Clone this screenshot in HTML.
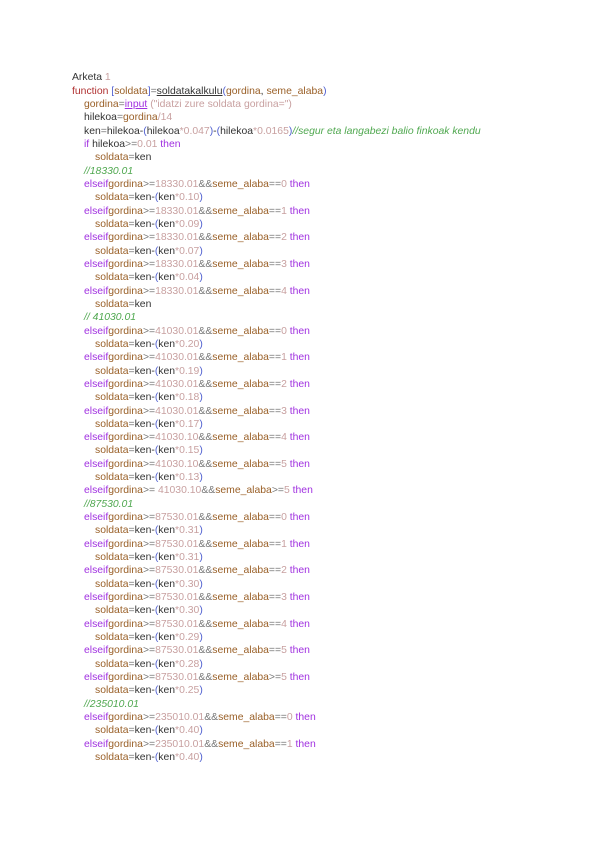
<!DOCTYPE html>
<html><head><meta charset="utf-8"><style>
html,body{margin:0;padding:0;background:#fff;width:600px;height:848px;overflow:hidden}
#c{position:absolute;left:72px;top:71.3px;font-family:"Liberation Sans",sans-serif;font-size:10.4px;line-height:13.33px;color:#333}
#c div{white-space:pre;height:13.33px}
.i1{padding-left:12px}.i2{padding-left:23px}
.k{color:#a030e0}.v{color:#9a6028}.n{color:#c8a0a0}.c{color:#50a850;font-style:italic}.p{color:#5060d0}.o{color:#777}.u{text-decoration:underline}
</style></head><body><div id="c"><div>Arketa <span class="n">1</span></div><div><span class="k" style="color:#b03030">function</span> <span class="p">[</span><span class="v">soldata</span><span class="p">]</span><span class="o">=</span><span class="u">soldatakalkulu</span><span class="p">(</span><span class="v">gordina</span>, <span class="v">seme_alaba</span><span class="p">)</span></div><div class="i1"><span class="v">gordina</span><span class="o">=</span><span class="k u">input</span> <span class="n">("idatzi zure soldata gordina=")</span></div><div class="i1">hilekoa<span class="o">=</span><span class="v">gordina</span><span class="n">/14</span></div><div class="i1">ken<span class="o">=</span>hilekoa-<span class="p">(</span>hilekoa<span class="n">*0.047</span><span class="p">)</span>-<span class="p">(</span>hilekoa<span class="n">*0.0165</span><span class="p">)</span><span class="c">//segur eta langabezi balio finkoak kendu</span></div><div class="i1"><span class="k">if</span> hilekoa<span class="o">&gt;=</span><span class="n">0.01</span> <span class="k">then</span></div><div class="i2"><span class="v">soldata</span><span class="o">=</span>ken</div><div class="i1 c">//18330.01</div><div class="i1"><span class="k">elseif</span><span class="v">gordina</span><span class="o">&gt;=</span><span class="n">18330.01</span><span class="o">&amp;&amp;</span><span class="v">seme_alaba</span><span class="o">==</span><span class="n">0</span> <span class="k">then</span></div><div class="i2"><span class="v">soldata</span><span class="o">=</span>ken-<span class="p">(</span>ken<span class="n">*0.10</span><span class="p">)</span></div><div class="i1"><span class="k">elseif</span><span class="v">gordina</span><span class="o">&gt;=</span><span class="n">18330.01</span><span class="o">&amp;&amp;</span><span class="v">seme_alaba</span><span class="o">==</span><span class="n">1</span> <span class="k">then</span></div><div class="i2"><span class="v">soldata</span><span class="o">=</span>ken-<span class="p">(</span>ken<span class="n">*0.09</span><span class="p">)</span></div><div class="i1"><span class="k">elseif</span><span class="v">gordina</span><span class="o">&gt;=</span><span class="n">18330.01</span><span class="o">&amp;&amp;</span><span class="v">seme_alaba</span><span class="o">==</span><span class="n">2</span> <span class="k">then</span></div><div class="i2"><span class="v">soldata</span><span class="o">=</span>ken-<span class="p">(</span>ken<span class="n">*0.07</span><span class="p">)</span></div><div class="i1"><span class="k">elseif</span><span class="v">gordina</span><span class="o">&gt;=</span><span class="n">18330.01</span><span class="o">&amp;&amp;</span><span class="v">seme_alaba</span><span class="o">==</span><span class="n">3</span> <span class="k">then</span></div><div class="i2"><span class="v">soldata</span><span class="o">=</span>ken-<span class="p">(</span>ken<span class="n">*0.04</span><span class="p">)</span></div><div class="i1"><span class="k">elseif</span><span class="v">gordina</span><span class="o">&gt;=</span><span class="n">18330.01</span><span class="o">&amp;&amp;</span><span class="v">seme_alaba</span><span class="o">==</span><span class="n">4</span> <span class="k">then</span></div><div class="i2"><span class="v">soldata</span><span class="o">=</span>ken</div><div class="i1 c">// 41030.01</div><div class="i1"><span class="k">elseif</span><span class="v">gordina</span><span class="o">&gt;=</span><span class="n">41030.01</span><span class="o">&amp;&amp;</span><span class="v">seme_alaba</span><span class="o">==</span><span class="n">0</span> <span class="k">then</span></div><div class="i2"><span class="v">soldata</span><span class="o">=</span>ken-<span class="p">(</span>ken<span class="n">*0.20</span><span class="p">)</span></div><div class="i1"><span class="k">elseif</span><span class="v">gordina</span><span class="o">&gt;=</span><span class="n">41030.01</span><span class="o">&amp;&amp;</span><span class="v">seme_alaba</span><span class="o">==</span><span class="n">1</span> <span class="k">then</span></div><div class="i2"><span class="v">soldata</span><span class="o">=</span>ken-<span class="p">(</span>ken<span class="n">*0.19</span><span class="p">)</span></div><div class="i1"><span class="k">elseif</span><span class="v">gordina</span><span class="o">&gt;=</span><span class="n">41030.01</span><span class="o">&amp;&amp;</span><span class="v">seme_alaba</span><span class="o">==</span><span class="n">2</span> <span class="k">then</span></div><div class="i2"><span class="v">soldata</span><span class="o">=</span>ken-<span class="p">(</span>ken<span class="n">*0.18</span><span class="p">)</span></div><div class="i1"><span class="k">elseif</span><span class="v">gordina</span><span class="o">&gt;=</span><span class="n">41030.01</span><span class="o">&amp;&amp;</span><span class="v">seme_alaba</span><span class="o">==</span><span class="n">3</span> <span class="k">then</span></div><div class="i2"><span class="v">soldata</span><span class="o">=</span>ken-<span class="p">(</span>ken<span class="n">*0.17</span><span class="p">)</span></div><div class="i1"><span class="k">elseif</span><span class="v">gordina</span><span class="o">&gt;=</span><span class="n">41030.10</span><span class="o">&amp;&amp;</span><span class="v">seme_alaba</span><span class="o">==</span><span class="n">4</span> <span class="k">then</span></div><div class="i2"><span class="v">soldata</span><span class="o">=</span>ken-<span class="p">(</span>ken<span class="n">*0.15</span><span class="p">)</span></div><div class="i1"><span class="k">elseif</span><span class="v">gordina</span><span class="o">&gt;=</span><span class="n">41030.10</span><span class="o">&amp;&amp;</span><span class="v">seme_alaba</span><span class="o">==</span><span class="n">5</span> <span class="k">then</span></div><div class="i2"><span class="v">soldata</span><span class="o">=</span>ken-<span class="p">(</span>ken<span class="n">*0.13</span><span class="p">)</span></div><div class="i1"><span class="k">elseif</span><span class="v">gordina</span><span class="o">&gt;=</span> <span class="n">41030.10</span><span class="o">&amp;&amp;</span><span class="v">seme_alaba</span><span class="o">&gt;=</span><span class="n">5</span> <span class="k">then</span></div><div class="i1 c">//87530.01</div><div class="i1"><span class="k">elseif</span><span class="v">gordina</span><span class="o">&gt;=</span><span class="n">87530.01</span><span class="o">&amp;&amp;</span><span class="v">seme_alaba</span><span class="o">==</span><span class="n">0</span> <span class="k">then</span></div><div class="i2"><span class="v">soldata</span><span class="o">=</span>ken-<span class="p">(</span>ken<span class="n">*0.31</span><span class="p">)</span></div><div class="i1"><span class="k">elseif</span><span class="v">gordina</span><span class="o">&gt;=</span><span class="n">87530.01</span><span class="o">&amp;&amp;</span><span class="v">seme_alaba</span><span class="o">==</span><span class="n">1</span> <span class="k">then</span></div><div class="i2"><span class="v">soldata</span><span class="o">=</span>ken-<span class="p">(</span>ken<span class="n">*0.31</span><span class="p">)</span></div><div class="i1"><span class="k">elseif</span><span class="v">gordina</span><span class="o">&gt;=</span><span class="n">87530.01</span><span class="o">&amp;&amp;</span><span class="v">seme_alaba</span><span class="o">==</span><span class="n">2</span> <span class="k">then</span></div><div class="i2"><span class="v">soldata</span><span class="o">=</span>ken-<span class="p">(</span>ken<span class="n">*0.30</span><span class="p">)</span></div><div class="i1"><span class="k">elseif</span><span class="v">gordina</span><span class="o">&gt;=</span><span class="n">87530.01</span><span class="o">&amp;&amp;</span><span class="v">seme_alaba</span><span class="o">==</span><span class="n">3</span> <span class="k">then</span></div><div class="i2"><span class="v">soldata</span><span class="o">=</span>ken-<span class="p">(</span>ken<span class="n">*0.30</span><span class="p">)</span></div><div class="i1"><span class="k">elseif</span><span class="v">gordina</span><span class="o">&gt;=</span><span class="n">87530.01</span><span class="o">&amp;&amp;</span><span class="v">seme_alaba</span><span class="o">==</span><span class="n">4</span> <span class="k">then</span></div><div class="i2"><span class="v">soldata</span><span class="o">=</span>ken-<span class="p">(</span>ken<span class="n">*0.29</span><span class="p">)</span></div><div class="i1"><span class="k">elseif</span><span class="v">gordina</span><span class="o">&gt;=</span><span class="n">87530.01</span><span class="o">&amp;&amp;</span><span class="v">seme_alaba</span><span class="o">==</span><span class="n">5</span> <span class="k">then</span></div><div class="i2"><span class="v">soldata</span><span class="o">=</span>ken-<span class="p">(</span>ken<span class="n">*0.28</span><span class="p">)</span></div><div class="i1"><span class="k">elseif</span><span class="v">gordina</span><span class="o">&gt;=</span><span class="n">87530.01</span><span class="o">&amp;&amp;</span><span class="v">seme_alaba</span><span class="o">&gt;=</span><span class="n">5</span> <span class="k">then</span></div><div class="i2"><span class="v">soldata</span><span class="o">=</span>ken-<span class="p">(</span>ken<span class="n">*0.25</span><span class="p">)</span></div><div class="i1 c">//235010.01</div><div class="i1"><span class="k">elseif</span><span class="v">gordina</span><span class="o">&gt;=</span><span class="n">235010.01</span><span class="o">&amp;&amp;</span><span class="v">seme_alaba</span><span class="o">==</span><span class="n">0</span> <span class="k">then</span></div><div class="i2"><span class="v">soldata</span><span class="o">=</span>ken-<span class="p">(</span>ken<span class="n">*0.40</span><span class="p">)</span></div><div class="i1"><span class="k">elseif</span><span class="v">gordina</span><span class="o">&gt;=</span><span class="n">235010.01</span><span class="o">&amp;&amp;</span><span class="v">seme_alaba</span><span class="o">==</span><span class="n">1</span> <span class="k">then</span></div><div class="i2"><span class="v">soldata</span><span class="o">=</span>ken-<span class="p">(</span>ken<span class="n">*0.40</span><span class="p">)</span></div></div></body></html>
